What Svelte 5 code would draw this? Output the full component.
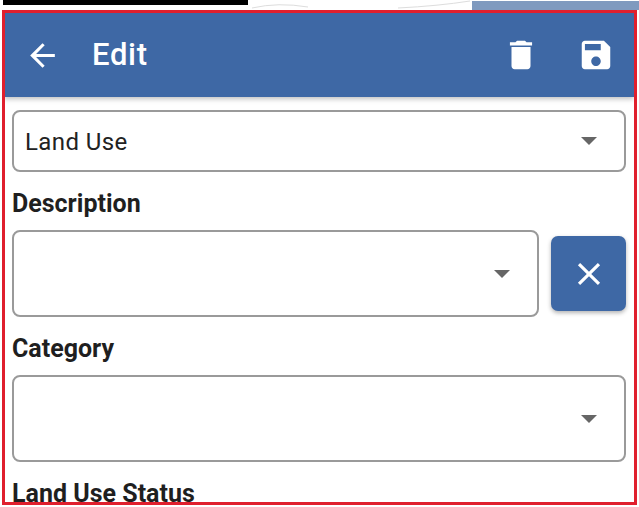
<script>
  // Edit form screen: app bar plus stacked select fields, clipped by the red frame.
  const arrowPath = 'M20 11H7.83l5.59-5.59L12 4l-8 8 8 8 1.41-1.41L7.83 13H20v-2z';
  const trashPath = 'M6 19c0 1.1.9 2 2 2h8c1.1 0 2-.9 2-2V7H6v12zM19 4h-3.5l-1-1h-5l-1 1H5v2h14V4z';
  const savePath =
    'M17 3H5c-1.11 0-2 .9-2 2v14c0 1.1.89 2 2 2h14c1.1 0 2-.9 2-2V7l-4-4zm-5 16c-1.66 0-3-1.34-3-3s1.34-3 3-3 3 1.34 3 3-1.34 3-3 3zm3-10H5V5h10v4z';
  const closePath =
    'M19 6.41 17.59 5 12 10.59 6.41 5 5 6.41 10.59 12 5 17.59 6.41 19 12 13.41 17.59 19 19 17.59 13.41 12z';
</script>

<div class="page">
  <div class="strip">
    <div class="blackbar"></div>
    <svg class="sketch" width="224" height="10" viewBox="0 0 224 10">
      <path d="M4 8 Q30 2 60 7 M150 8 Q190 6 222 1" fill="none" stroke="#ddd" stroke-width="1" />
    </svg>
    <div class="bluebit"></div>
  </div>

  <div class="frame">
    <header class="appbar">
      <svg class="back" width="37" height="37" viewBox="0 0 24 24"><path d={arrowPath} fill="#fff" /></svg>
      <h1>Edit</h1>
      <span class="spacer"></span>
      <svg class="trash" width="38" height="38" viewBox="0 0 24 24"><path d={trashPath} fill="#fff" /></svg>
      <svg class="save" width="38" height="38" viewBox="0 0 24 24"><path d={savePath} fill="#fff" /></svg>
    </header>

    <div class="form">
      <div class="select first">
        <span class="value">Land Use</span>
        <span class="caret"></span>
      </div>

      <div class="label">Description</div>
      <div class="row">
        <div class="select tall">
          <span class="value"></span>
          <span class="caret"></span>
        </div>
        <button class="clear" aria-label="Clear">
          <svg width="38" height="38" viewBox="0 0 24 24"><path d={closePath} fill="#fff" /></svg>
        </button>
      </div>

      <div class="label">Category</div>
      <div class="select tall">
        <span class="value"></span>
        <span class="caret"></span>
      </div>

      <div class="label">Land Use Status</div>
    </div>
  </div>
</div>

<style>
  :global(body) {
    background: #fff;
    font-family: Roboto, 'Liberation Sans', sans-serif;
  }
  .page {
    width: 639px;
    height: 507px;
    overflow: hidden;
  }
  .strip {
    display: flex;
    height: 10px;
  }
  .blackbar {
    width: 245px;
    height: 5px;
    margin-left: 3px;
    background: #000;
  }
  .sketch {
    display: block;
  }
  .bluebit {
    flex: 1;
    margin-top: 1px;
    background: #7f9abf;
  }
  .frame {
    box-sizing: border-box;
    width: 635px;
    height: 495px;
    margin-left: 2px;
    border: 3px solid #e01f2d;
    overflow: hidden;
    background: #fff;
  }
  .appbar {
    display: flex;
    align-items: center;
    height: 84px;
    margin-left: -1px;
    padding: 0 19px 0 20px;
    background: #3e68a5;
    box-shadow: 0 2px 5px rgba(0, 0, 0, 0.25);
    position: relative;
  }
  .appbar h1 {
    margin: 0 0 2px 31px;
    font-size: 31px;
    font-weight: 500;
    color: #fff;
    letter-spacing: 0.7px;
  }
  .spacer {
    flex: 1;
  }
  .save {
    margin-left: 37px;
  }
  .form {
    padding: 13px 8px 0 7px;
    display: flex;
    flex-direction: column;
  }
  .select {
    box-sizing: border-box;
    flex: 1;
    height: 62px;
    display: flex;
    align-items: center;
    justify-content: space-between;
    padding: 0 27px 0 11px;
    border: 2px solid #9a9a9a;
    border-radius: 8px;
    background: #fff;
  }
  .first {
    flex: none;
  }
  .tall {
    flex: none;
    height: 87px;
  }
  .row .tall {
    flex: 1;
  }
  .value {
    padding-top: 2px;
    font-size: 24px;
    color: #222;
    letter-spacing: 0.4px;
  }
  .caret {
    width: 0;
    height: 0;
    border-left: 8px solid transparent;
    border-right: 8px solid transparent;
    border-top: 8px solid #666;
  }
  .label {
    margin-top: 18px;
    margin-bottom: 13px;
    font-size: 25px;
    line-height: 27px;
    font-weight: 700;
    color: #1f1f1f;
  }
  .row {
    display: flex;
    align-items: center;
    gap: 12px;
  }
  .clear {
    width: 75px;
    height: 75px;
    flex: none;
    display: flex;
    align-items: center;
    justify-content: center;
    padding: 0;
    border: none;
    border-radius: 7px;
    background: #3e68a5;
    box-shadow: 0 2px 4px rgba(0, 0, 0, 0.3);
  }
</style>
